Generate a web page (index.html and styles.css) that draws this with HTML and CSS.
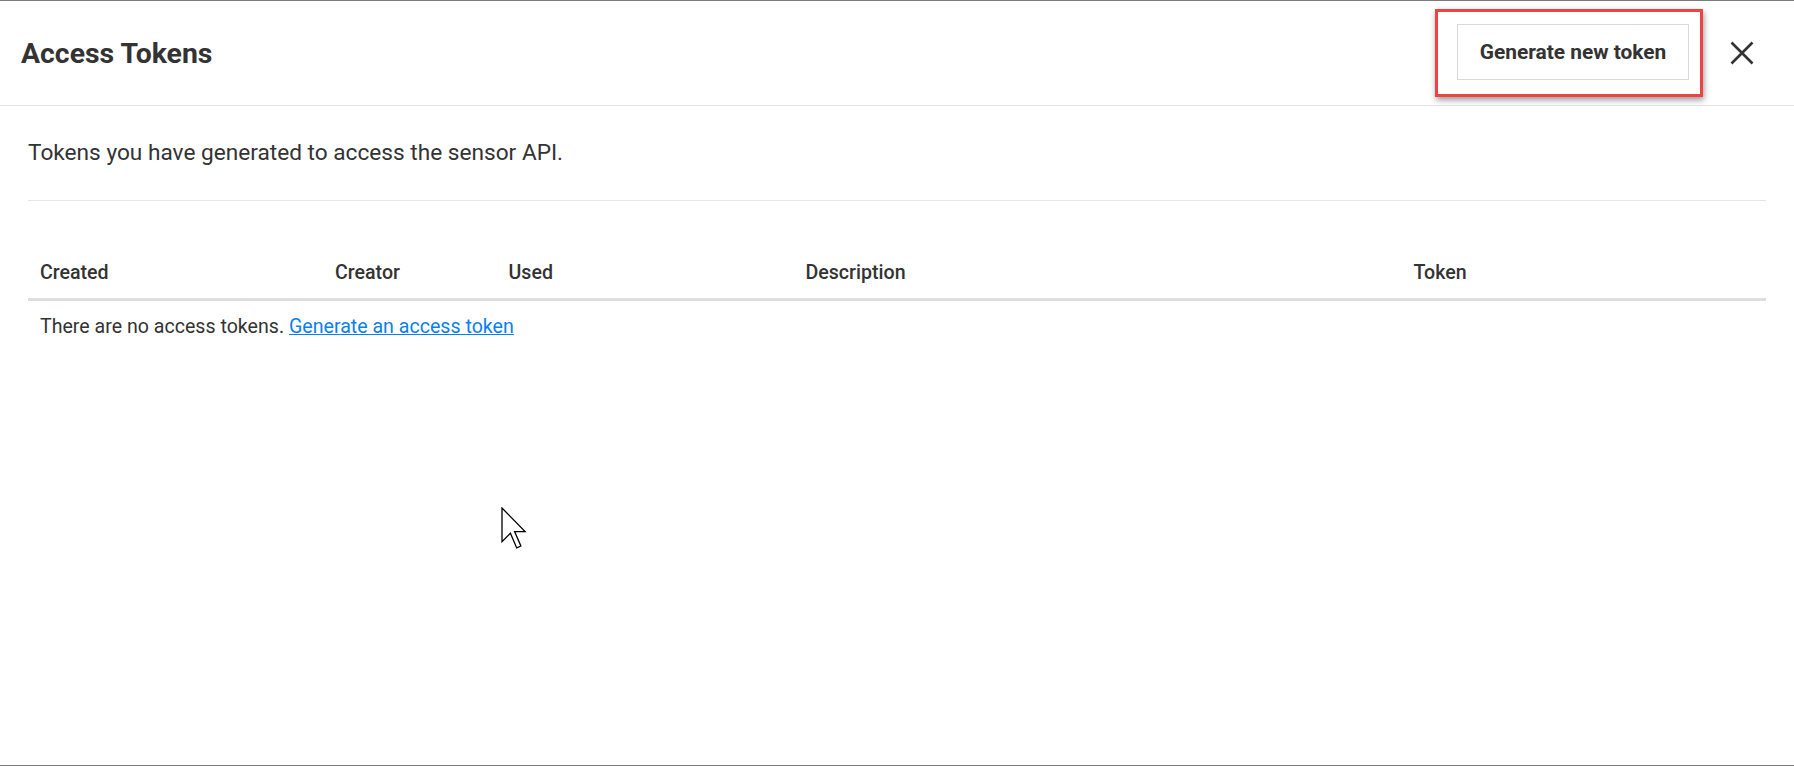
FILE: index.html
```html
<!DOCTYPE html>
<html lang="en">
<head>
<meta charset="utf-8">
<title>Access Tokens</title>
<link rel="stylesheet" href="styles.css">
</head>
<body>
<div class="frame">
  <header class="modal-header">
    <h1 class="title">Access Tokens</h1>
    <div class="annotation">
      <button class="btn" type="button">Generate new token</button>
    </div>
    <button class="close" type="button" aria-label="Close">
      <svg width="24" height="24" viewBox="0 0 24 24"><path d="M1.5 1.5 L22.5 22.5 M22.5 1.5 L1.5 22.5" stroke="#333" stroke-width="2.6" fill="none"/></svg>
    </button>
  </header>
  <main class="content">
    <p class="lead">Tokens you have generated to access the sensor API.</p>
    <hr class="divider">
    <table class="tokens">
      <colgroup>
        <col class="c-created">
        <col class="c-creator">
        <col class="c-used">
        <col class="c-desc">
        <col class="c-token">
      </colgroup>
      <thead>
        <tr>
          <th>Created</th>
          <th>Creator</th>
          <th>Used</th>
          <th>Description</th>
          <th>Token</th>
        </tr>
      </thead>
      <tbody>
        <tr>
          <td colspan="5">There are no access tokens. <a href="#" class="link">Generate an access token</a></td>
        </tr>
      </tbody>
    </table>
  </main>
  <svg class="cursor" width="28" height="44" viewBox="0 0 28 44"><path d="M1 1 L1 34.6 L9.4 26.2 L15.7 40.9 L19.9 39 L13.6 24.6 L24.1 24.6 Z" fill="#fff" stroke="#000" stroke-width="1.3" stroke-linejoin="miter"/></svg>
</div>
</body>
</html>
```

FILE: styles.css
```css
* { box-sizing: border-box; }
html, body { margin: 0; padding: 0; background: #fff; }
body {
  font-family: Roboto, "Noto Sans", "Liberation Sans", sans-serif;
  color: #333;
}
.frame {
  position: relative;
  width: 1794px;
  height: 766px;
  border-top: 1px solid #7b7b7b;
  border-bottom: 1px solid #7b7b7b;
  display: flex;
  flex-direction: column;
  overflow: hidden;
}
.modal-header {
  display: flex;
  align-items: center;
  height: 105px;
  padding: 0 40px 0 21px;
  border-bottom: 1px solid #e3e3e3;
}
.title {
  flex: 1;
  margin: 0;
  font-size: 28.4px;
  font-weight: 700;
  color: #333;
  letter-spacing: 0;
}
.annotation {
  border: 3px solid #ee4343;
  padding: 12px 11px 14px 19px;
  box-shadow: 1px 3px 6px rgba(0,0,0,0.4);
  margin-right: 27px;
}
.btn {
  display: block;
  width: 232px;
  height: 56px;
  background: #fff;
  border: 1px solid #d9d9d9;
  font-family: inherit;
  font-size: 20.9px;
  font-weight: 700;
  color: #333;
  padding: 0;
}
.close {
  background: none;
  border: 0;
  padding: 0;
  width: 24px;
  height: 24px;
  display: block;
}
.close svg { display: block; }
.content {
  padding: 0 28px;
}
.lead {
  margin: 33px 0 0;
  font-size: 22.65px;
  line-height: normal;
  color: #333;
}
.divider {
  margin: 34px 0 0;
  border: 0;
  border-top: 1px solid #e6e6e6;
  height: 0;
}
.tokens {
  width: 100%;
  margin-top: 48px;
  border-collapse: collapse;
  table-layout: fixed;
  font-size: 19.6px;
}
.c-created { width: 295px; }
.c-creator { width: 173.5px; }
.c-used { width: 297px; }
.c-desc { width: 608px; }
.tokens th {
  text-align: left;
  font-weight: 500;
  padding: 12px 12px 14px;
  line-height: normal;
  border-bottom: 3px solid #dedede;
  color: #333;
}
.tokens td {
  padding: 14px 12px;
  line-height: normal;
  color: #333;
}
.link {
  color: #0a7ff2;
  text-decoration: underline;
}
.cursor {
  position: absolute;
  left: 501px;
  top: 506px;
}
```
